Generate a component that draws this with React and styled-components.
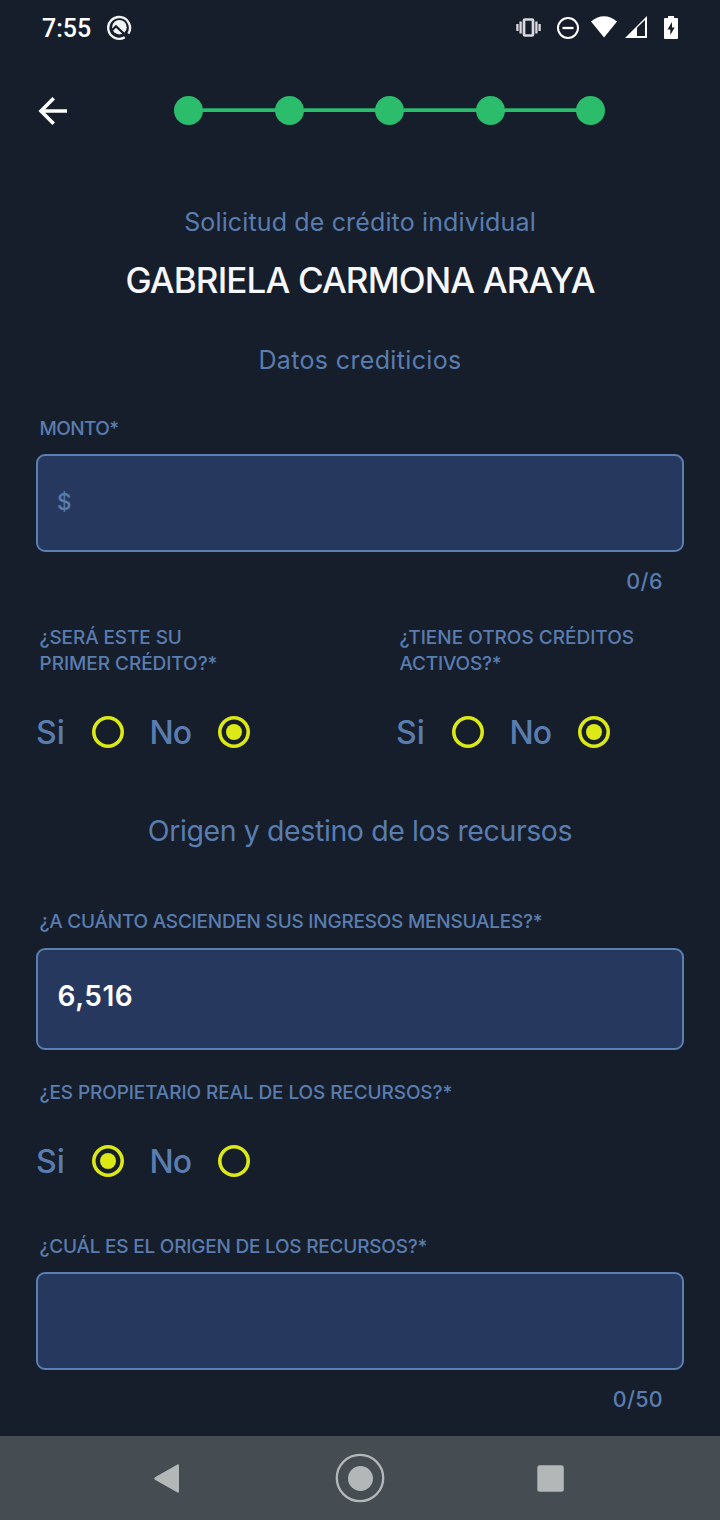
import React, { useState } from "react";
import styled, { createGlobalStyle, ThemeProvider } from "styled-components";

const theme = {
  bg: "#161d2b",
  text: "#5a7db0",
  field: "#27385f",
  border: "#5a7fb2",
  white: "#ffffff",
  green: "#2bbc6c",
  lime: "#dbe914",
  nav: "#454d52",
  navIcon: "#b3b7b8",
};

const GlobalStyle = createGlobalStyle`
  *, *::before, *::after { box-sizing: border-box; }
  body { margin: 0; background: ${theme.bg}; }
  p, h1, h2 { margin: 0; }
`;

const Screen = styled.div`
  display: flex;
  flex-direction: column;
  width: 720px;
  height: 1520px;
  overflow: hidden;
  background: ${(p) => p.theme.bg};
  color: ${(p) => p.theme.text};
  font-family: Inter, "Liberation Sans", sans-serif;
`;

const StatusBar = styled.div`
  display: flex;
  align-items: center;
  justify-content: space-between;
  height: 56px;
  padding: 0 41px 0 42px;
  color: ${(p) => p.theme.white};
`;

const StatusLeft = styled.div`
  display: flex;
  align-items: center;
  gap: 14px;
`;

const Clock = styled.span`
  width: 51px;
  padding-top: 2px;
  font: 500 25px/30px Roboto, sans-serif;
  white-space: nowrap;
`;

const StatusIcons = styled.svg`
  display: block;
  width: 164px;
  height: 56px;
`;

const Header = styled.header`
  display: flex;
  align-items: center;
  height: 108px;
  padding: 0 115px 0 32px;
`;

const BackButton = styled.button`
  display: flex;
  width: 42px;
  height: 42px;
  margin-right: 100px;
  padding: 0;
  border: 0;
  background: none;
  color: ${(p) => p.theme.white};
`;

const Stepper = styled.div`
  display: flex;
  flex: 1;
  align-items: center;
`;

const StepDot = styled.span`
  flex: none;
  width: 29px;
  height: 29px;
  border-radius: 50%;
  background: ${(p) => p.theme.green};
`;

const StepLine = styled.span`
  flex: 1;
  height: 4px;
  margin: 0 -1px;
  background: ${(p) => p.theme.green};
  border-top: 1px solid #23905a;
`;

const Form = styled.main`
  display: flex;
  flex: 1;
  flex-direction: column;
  padding: 38px 36px 0;
`;

const Caption = styled.p`
  margin-top: ${(p) => p.$top || 0}px;
  font-size: ${(p) => p.$size}px;
  font-weight: 400;
  line-height: 40px;
  letter-spacing: ${(p) => p.$track}px;
  text-align: center;
  white-space: nowrap;
`;

const Name = styled.h1`
  margin-top: 14px;
  color: #f6f7fd;
  font-size: 35px;
  font-weight: 500;
  line-height: 48px;
  letter-spacing: ${(p) => p.$track}px;
  text-align: center;
  white-space: nowrap;
`;

const Label = styled.p`
  margin-top: ${(p) => p.$top || 0}px;
  padding-left: 3.5px;
  font-size: 19px;
  font-weight: 500;
  line-height: 26px;
  letter-spacing: ${(p) => p.$track}px;
  white-space: nowrap;
`;

const Line = styled.span`
  display: block;
  letter-spacing: ${(p) => p.$track}px;
`;

const Field = styled.div`
  display: flex;
  align-items: center;
  height: ${(p) => p.$height}px;
  margin-top: ${(p) => p.$top}px;
  padding: 0 20px 3px 19px;
  border: 2px solid ${(p) => p.theme.border};
  border-radius: 9px;
  background: ${(p) => p.theme.field};
`;

const Prefix = styled.span`
  padding-top: 1px;
  font-size: 22.5px;
  font-weight: 500;
  line-height: 30px;
`;

const Value = styled.span`
  padding: 0 0 4px 0.6px;
  color: ${(p) => p.theme.white};
  font-size: 28px;
  font-weight: 600;
  line-height: 34px;
  letter-spacing: 0.5px;
`;

const Counter = styled.p`
  margin-top: ${(p) => p.$top}px;
  padding-right: 21px;
  font-size: 21.5px;
  font-weight: 500;
  line-height: 26px;
  letter-spacing: ${(p) => p.$track}px;
  text-align: right;
`;

const Columns = styled.div`
  display: grid;
  grid-template-columns: 360px 288px;
  margin-top: 31px;
`;

const RadioGroup = styled.div`
  display: flex;
  align-items: center;
  height: 40px;
  margin-top: ${(p) => p.$top}px;
`;

const RadioText = styled.span`
  width: ${(p) => p.$width}px;
  padding-top: 2px;
  font-size: 32px;
  font-weight: 500;
  line-height: 40px;
  letter-spacing: ${(p) => p.$track || 0}px;
  white-space: nowrap;
`;

const Radio = styled.button`
  display: flex;
  align-items: center;
  justify-content: center;
  width: 32px;
  height: 32px;
  margin-right: 26px;
  padding: 0;
  border: 0;
  border-radius: 50%;
  background: none;
  box-shadow: inset 0 0 0 3.6px ${(p) => p.theme.lime};

  &::after {
    content: "";
    width: 16px;
    height: 16px;
    border-radius: 50%;
    background: ${(p) => (p.$checked ? p.theme.lime : "transparent")};
  }
`;

const NavBar = styled.nav`
  height: 84px;
  background: ${(p) => p.theme.nav};
`;

function YesNo({ initial, top }) {
  const [value, setValue] = useState(initial);
  return (
    <RadioGroup $top={top}>
      <RadioText $width={55.5}>Si</RadioText>
      <Radio aria-label="Si" $checked={value === "si"} onClick={() => setValue("si")} />
      <RadioText $width={68.5} $track={-0.9}>No</RadioText>
      <Radio aria-label="No" $checked={value === "no"} onClick={() => setValue("no")} />
    </RadioGroup>
  );
}

function Steps({ count }) {
  return (
    <Stepper>
      {Array.from({ length: count }, (_, i) => (
        <React.Fragment key={i}>
          {i > 0 && <StepLine />}
          <StepDot />
        </React.Fragment>
      ))}
    </Stepper>
  );
}

export default function App() {
  return (
    <ThemeProvider theme={theme}>
      <GlobalStyle />
      <Screen>
        <StatusBar>
          <StatusLeft>
            <Clock>7:55</Clock>
            <svg width="26" height="26" viewBox="0 0 26 26" fill="none">
              <path d="M17.8 22.2A10.9 10.9 0 1 1 21.4 18.6" stroke="#f1f2f4" strokeWidth="2.4" />
              <circle cx="12.4" cy="12.2" r="7.3" fill="#f1f2f4" />
              <path d="M4 16.2L9 11.2L21 22.6" stroke={theme.bg} strokeWidth="2.2" />
            </svg>
          </StatusLeft>
          <StatusIcons viewBox="515 0 164 56" fill="none">
            <g stroke="#d8dade" strokeWidth="2">
              <rect x="524" y="19.5" width="9" height="16" rx="1" strokeWidth="2.7" />
              <path d="M520.6 21.5V33.5M517.4 24V31M536.4 21.5V33.5M539.6 24V31" strokeWidth="2.3" />
            </g>
            <circle cx="568" cy="28" r="10" stroke="#fff" strokeWidth="2" />
            <path d="M562.5 28H573.5" stroke="#fff" strokeWidth="2.3" />
            <path d="M591 21.5Q604 11 617 21.5L604 37.5Z" fill="#fff" />
            <path d="M625 38L647 16V38Z" fill="#fff" />
            <path d="M637 27.8L645 20V36H637Z" fill="#161d2b" />
            <path d="M668 16H674V18H677Q678 18 678 19V38Q678 39 677 39H665Q664 39 664 38V19Q664 18 665 18H668Z" fill="#fff" />
            <path d="M672 22L667.5 29.5H670.3V35L674.7 27.5H672Z" fill="#161d2b" />
          </StatusIcons>
        </StatusBar>

        <Header>
          <BackButton aria-label="Atrás">
            <svg width="42" height="42" viewBox="0 0 42 42" fill="none" stroke="currentColor" strokeWidth="3.6">
              <path d="M35 22H9.5M21.7 9.2L9 22L21.7 34.8" />
            </svg>
          </BackButton>
          <Steps count={5} />
        </Header>

        <Form>
          <Caption $size={25} $track={0.14}>Solicitud de crédito individual</Caption>
          <Name $track={-0.87}>GABRIELA CARMONA ARAYA</Name>
          <Caption $top={36} $size={25} $track={0.35}>Datos crediticios</Caption>

          <Label $top={36} $track={-0.6}>MONTO*</Label>
          <Field $top={12} $height={98}>
            <Prefix>$</Prefix>
          </Field>
          <Counter $top={16} $track={0.5}>0/6</Counter>

          <Columns>
            <div>
              <Label>
                <Line $track={-0.1}>¿SERÁ ESTE SU</Line>
                <Line $track={-0.05}>PRIMER CRÉDITO?*</Line>
              </Label>
              <YesNo initial="no" top={35} />
            </div>
            <div>
              <Label>
                <Line $track={0}>¿TIENE OTROS CRÉDITOS</Line>
                <Line $track={-0.2}>ACTIVOS?*</Line>
              </Label>
              <YesNo initial="no" top={35} />
            </div>
          </Columns>

          <Caption $top={59} $size={28.5} $track={-0.4}>Origen y destino de los recursos</Caption>

          <Label $top={58} $track={-0.23}>¿A CUÁNTO ASCIENDEN SUS INGRESOS MENSUALES?*</Label>
          <Field $top={13} $height={102}>
            <Value>6,516</Value>
          </Field>

          <Label $top={30} $track={-0.1}>¿ES PROPIETARIO REAL DE LOS RECURSOS?*</Label>
          <YesNo initial="si" top={35} />

          <Label $top={53} $track={-0.22}>¿CUÁL ES EL ORIGEN DE LOS RECURSOS?*</Label>
          <Field $top={12} $height={98} />
          <Counter $top={16} $track={0.3}>0/50</Counter>
        </Form>

        <NavBar>
          <svg width="720" height="84" viewBox="0 0 720 84" fill={theme.navIcon}>
            <path d="M155 41.2L177 28.7Q179 27.7 179 29.7V55Q179 57.5 177 56.3L155 43.8Q153.4 42.5 155 41.2Z" />
            <circle cx="360" cy="42" r="23.2" fill="none" stroke={theme.navIcon} strokeWidth="2.3" />
            <circle cx="360.5" cy="42.5" r="12.5" />
            <rect x="537.3" y="29.3" width="26.5" height="26.5" rx="2.5" />
          </svg>
        </NavBar>
      </Screen>
    </ThemeProvider>
  );
}
